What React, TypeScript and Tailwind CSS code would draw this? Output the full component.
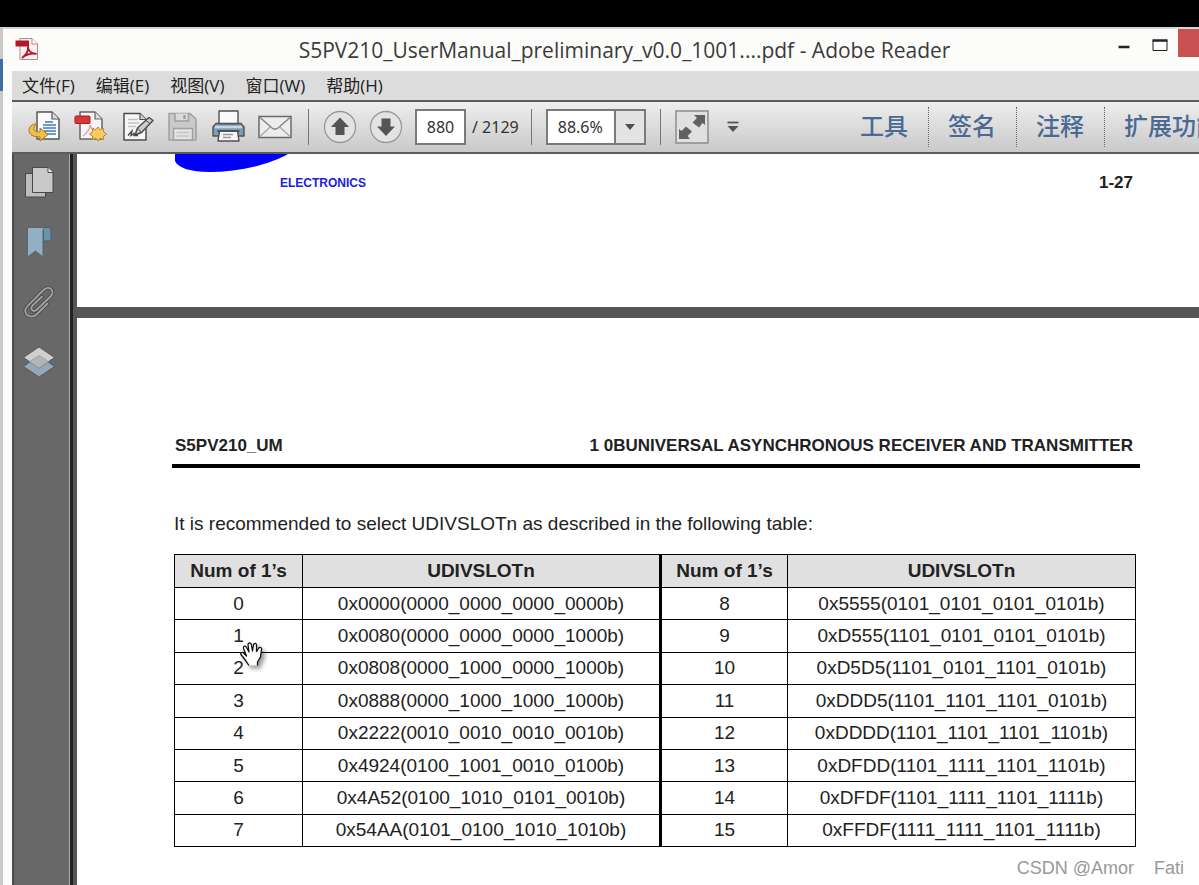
import { useState } from 'react'
import type { ReactNode } from 'react'

const MENU_ITEMS = ['文件(F)', '编辑(E)', '视图(V)', '窗口(W)', '帮助(H)']
const TASK_PANES = ['工具', '签名', '注释', '扩展功能']

const SLOT_ROWS = [
  ['0', '0x0000(0000_0000_0000_0000b)', '8', '0x5555(0101_0101_0101_0101b)'],
  ['1', '0x0080(0000_0000_0000_1000b)', '9', '0xD555(1101_0101_0101_0101b)'],
  ['2', '0x0808(0000_1000_0000_1000b)', '10', '0xD5D5(1101_0101_1101_0101b)'],
  ['3', '0x0888(0000_1000_1000_1000b)', '11', '0xDDD5(1101_1101_1101_0101b)'],
  ['4', '0x2222(0010_0010_0010_0010b)', '12', '0xDDDD(1101_1101_1101_1101b)'],
  ['5', '0x4924(0100_1001_0010_0100b)', '13', '0xDFDD(1101_1111_1101_1101b)'],
  ['6', '0x4A52(0100_1010_0101_0010b)', '14', '0xDFDF(1101_1111_1101_1111b)'],
  ['7', '0x54AA(0101_0100_1010_1010b)', '15', '0xFFDF(1111_1111_1101_1111b)'],
]

function PdfIcon() {
  return (
    <svg className="w-6 h-6" viewBox="0 0 24 24" fill="none">
      <path d="M5 1.5H17L22.5 7V22.5H5Z" fill="#f8f1f1" stroke="#b08a8a" />
      <path d="M17 1.5V7H22.5" fill="#fff" stroke="#b08a8a" />
      <rect x="0.5" y="3.5" width="13.5" height="6" fill="#b3162b" />
      <path d="M7.500 20.500C11 18 13.500 13.500 13 9.500C13 13.500 16 16.500 21 16.800C16 16.300 11.500 17.300 7.500 20.500Z" stroke="#b3162b" strokeWidth="1.800" strokeLinejoin="round" />
    </svg>
  )
}

function OpenIcon() {
  return (
    <svg className="w-[34px] h-[34px]" viewBox="0 0 34 34" fill="none">
      <path d="M9 2H24L31 9V29H9Z" fill="#fafafa" stroke="#555" strokeWidth="1.5" strokeLinejoin="round" />
      <path d="M24 2V9H31" fill="#ddd" stroke="#555" strokeWidth="1.2" />
      <path d="M17 12H25M15 15H28M15 18H28M16 21H28M18 24H28" stroke="#3a7cc0" strokeWidth="1.5" />
      <path d="M9.500 13.500C3.500 14 1 17 1 20.500C1 25 6 27 12 27V31L20 24.500L12 18V22C8.500 22 6 21 6 18.800C6 16.500 7.500 14.800 9.500 13.500Z" fill="#f4be4b" stroke="#a8741b" strokeLinejoin="round" />
    </svg>
  )
}

function CreatePdfIcon() {
  return (
    <svg className="w-[34px] h-[34px]" viewBox="0 0 34 34" fill="none">
      <path d="M6 2H21L28 9V29H6Z" fill="#f5f5f5" stroke="#666" strokeWidth="1.5" strokeLinejoin="round" />
      <path d="M21 2V9H28" fill="#ddd" stroke="#666" strokeWidth="1.200" />
      <path d="M9 26C14 22 16 18 16 15C17 19 20 21 23 21" stroke="#e7a8a6" strokeWidth="1.500" />
      <rect x="1" y="6" width="15" height="7.500" rx="1" fill="#dc3438" stroke="#9d1f25" />
      <path d="M24 17L26.100 19.800L29.300 18.300L29.500 21.800L32.500 24L29.500 26.200L29.300 29.700L26.100 28.200L24 31L21.900 28.200L18.700 29.700L18.500 26.200L15.500 24L18.500 21.800L18.700 18.300L21.900 19.800Z" fill="#f7cd62" stroke="#b98527" strokeLinejoin="round" />
    </svg>
  )
}

function SignIcon() {
  return (
    <svg className="w-[34px] h-[34px]" viewBox="0 0 34 34" fill="none">
      <path d="M4 3.500H20L26 9.500V30H4Z" fill="#f6f6f6" stroke="#4d4d4d" strokeWidth="1.500" strokeLinejoin="round" />
      <path d="M20 3.500V9.500H26" fill="#d4d4d4" stroke="#4d4d4d" strokeWidth="1.200" />
      <path d="M8 9.500H18M8 13H19M8 16.500H16" stroke="#c2c2c2" strokeWidth="1.500" />
      <path d="M8 25.500L12 21L11 25.500L14 23.500V25.500H18" stroke="#444" strokeWidth="1.300" />
      <path d="M15 25L17.500 18L29 7.500L33 10.500L21.500 22.500Z" fill="#c9ced4" stroke="#4d4d4d" strokeWidth="1.500" strokeLinejoin="round" />
      <path d="M17.500 18L21.500 22.500M26 10.500L30 13.500" stroke="#4d4d4d" />
    </svg>
  )
}

function SaveIcon() {
  return (
    <svg className="w-[34px] h-[34px]" viewBox="0 0 34 34" fill="none" stroke="#a0a0a0" strokeWidth="1.500">
      <path d="M3 3.500H24L30 9V30H3Z" fill="#cacaca" strokeLinejoin="round" />
      <path d="M9 3.500V11H22.500V3.500" fill="#dadada" />
      <path d="M18.500 5V9" strokeWidth="2.500" />
      <rect x="7.500" y="18.500" width="19" height="11.500" fill="#e4e4e4" />
      <path d="M10.500 22.500H23.500M10.500 26H23.500" stroke="#c4c4c4" />
    </svg>
  )
}

function PrintIcon() {
  return (
    <svg className="w-[34px] h-[34px]" viewBox="0 0 34 34" fill="none" stroke="#505050" strokeWidth="1.400" strokeLinejoin="round">
      <path d="M4 13.500H29L32 17V26H1V17Z" fill="#7d9dba" />
      <rect x="7" y="1" width="19" height="12.500" fill="#fafafa" />
      <path d="M3 17H30" stroke="#c6d8e6" strokeWidth="2.500" />
      <path d="M7.500 21H25.500L27 31H6Z" fill="#f7f7f7" />
      <path d="M5.500 21H27.500" strokeWidth="2" />
      <path d="M11 24.500H21M11 27.500H19" stroke="#999" />
    </svg>
  )
}

function MailIcon() {
  return (
    <svg className="w-[34px] h-[34px]" viewBox="0 0 34 34" fill="none" stroke="#6a6a6a" strokeWidth="1.500">
      <rect x="1" y="6.500" width="32" height="21" fill="#ededed" />
      <path d="M2 7.500L14 18C16 19.500 18 19.500 20 18L32 7.500" stroke="#858585" />
      <path d="M2 26.500L12.500 16.800M32 26.500L21.500 16.800" stroke="#a5a5a5" strokeWidth="1.200" />
    </svg>
  )
}

function ArrowIcon({ down }: { down?: boolean }) {
  return (
    <svg className="w-[34px] h-[34px]" viewBox="0 0 34 34" fill="none">
      <circle cx="17" cy="17" r="15.500" fill="#e3e3e3" stroke="#999" strokeWidth="1.300" />
      <path d={down ? 'M12.500 8.500H21.500V16.500H26L17 26L8 16.500H12.500Z' : 'M17 7.500L26 17H21.500V25H12.500V17H8Z'} fill="#555" />
    </svg>
  )
}

function FullScreenIcon() {
  return (
    <svg className="w-[34px] h-[34px]" viewBox="0 0 34 34" fill="none">
      <rect x="1" y="1" width="32" height="32" fill="#e0e0e0" stroke="#8d8d8d" strokeWidth="1.500" />
      <path d="M19 5H30V15L27.500 13L24 17.500L17.500 12.500L22 8Z" fill="#616161" />
      <path d="M15 29H4V19L6.500 21L11 16.500L17 21.500L12.500 26Z" fill="#616161" />
    </svg>
  )
}

function PagesIcon() {
  return (
    <svg className="w-8 h-8" viewBox="0 0 32 32" fill="none" stroke="#484848" strokeLinejoin="round">
      <path d="M2.500 7.500H22.500V31H2.500Z" fill="#bdbdbd" />
      <path d="M9.500 1.500H25L30 6.500V26.500H9.500Z" fill="#c9c9c9" />
      <path d="M25 1.500V6.500H30" fill="#eee" />
    </svg>
  )
}

function BookmarkIcon() {
  return (
    <svg className="w-8 h-8" viewBox="0 0 32 32" fill="none" strokeLinejoin="round">
      <path d="M18 1.500H25C27 1.500 28 3 28 5V15H20.500V5Z" fill="#6b93ab" stroke="#47616f" />
      <path d="M6 1.500H22C20.500 2 20 3.500 20 5V31L12.500 25L4.500 31V4C4.500 2.500 5 1.500 6 1.500Z" fill="#92afc6" stroke="#56656f" />
    </svg>
  )
}

function ClipIcon() {
  return (
    <svg className="w-8 h-8" viewBox="0 0 32 32" fill="none" strokeLinecap="round">
      <path d="M24.500 17.500L13.500 28.500C7 34 -1.500 27 4 20.500L20.500 4C26 -1.500 33 5 27.500 10.500L13.500 24C10 26.500 6.500 23 9.500 19.500L19 10.500" stroke="#474747" strokeWidth="3.500" />
      <path d="M24.500 17.500L13.500 28.500C7 34 -1.500 27 4 20.500L20.500 4C26 -1.500 33 5 27.500 10.500L13.500 24C10 26.500 6.500 23 9.500 19.500L19 10.500" stroke="#a2a2a2" strokeWidth="1.800" />
    </svg>
  )
}

function LayersIcon() {
  return (
    <svg className="w-8 h-8" viewBox="0 0 32 32" fill="none" stroke="#4c4c4c" strokeWidth="0.800">
      <path d="M16 9.500L31.500 20.500L16 31L0.500 20.500Z" fill="#93a9b9" />
      <path d="M16 1L31.500 11.500L16 22L0.500 11.500Z" fill="#cfcfcf" />
      <path d="M16 9.500L25.500 15.500L16 22L6.500 15.500Z" fill="#b2b6b9" stroke="#999" />
    </svg>
  )
}

function HandCursor() {
  return (
    <svg className="absolute left-[64px] top-[16px] w-7 h-7 z-10 drop-shadow-[3px_3px_2px_rgba(0,0,0,0.4)]" viewBox="0 0 28 28" aria-hidden="true">
      <path
        d="M10 25.500L7 21L2 14.500C1 12.500 3.500 11.500 5 13.500L7.500 16L4.500 8.500C4 6 6.500 5.200 7.500 7.500L10 12L9 5C9 2.500 11.800 2.200 12.300 4.500L13.500 11L14.500 5C15 2.500 17.800 3 17.500 5.500L17.500 11.500L19.500 8.500C20.500 6.500 23 7.500 22.500 9.500L21.500 17L18.500 22V25.500Z"
        fill="#fff"
      />
      <path
        d="M10 25.500L7 21L2 14.500C1 12.500 3.500 11.500 5 13.500L7.500 16L4.500 8.500C4 6 6.500 5.200 7.500 7.500L10 12L9 5C9 2.500 11.800 2.200 12.300 4.500L13.500 11L14.500 5C15 2.500 17.800 3 17.500 5.500L17.500 11.500L19.500 8.500C20.500 6.500 23 7.500 22.500 9.500L21.500 17L18.500 22V25.500"
        fill="none"
        stroke="#111"
        strokeWidth="1.300"
        strokeLinejoin="round"
      />
    </svg>
  )
}

function ToolButton({ label, children }: { label: string; children: ReactNode }) {
  return (
    <button type="button" aria-label={label} className="w-[34px] h-[34px] shrink-0 hover:brightness-105">
      {children}
    </button>
  )
}

function Divider() {
  return <span className="w-px h-9 shrink-0 bg-[#777]" />
}

function TitleBar() {
  return (
    <header className="flex items-start h-[44px] border-t-2 border-[#d5d5d3] bg-[#fcfcfa]">
      <span className="ml-3 mt-2 shrink-0">
        <PdfIcon />
      </span>
      <h1 className="flex-1 mt-1 pl-[104px] text-center text-[21px] leading-[34px] text-[#3b3b3b] whitespace-nowrap font-['Open_Sans','Noto_Sans',sans-serif]">
        S5PV210_UserManual_preliminary_v0.0_1001....pdf - Adobe Reader
      </h1>
      <div className="flex shrink-0">
        <button type="button" aria-label="最小化" className="w-9 h-8 flex items-center justify-center">
          <svg className="w-3 h-3" viewBox="0 0 12 12">
            <path d="M0.500 8H11.500" stroke="#222" strokeWidth="2.500" />
          </svg>
        </button>
        <button type="button" aria-label="最大化" className="w-9 h-8 flex items-center justify-center">
          <svg className="w-4 h-3" viewBox="0 0 16 12" fill="none">
            <path d="M1 1.500H15V11.500H1Z" stroke="#222" />
            <path d="M0.500 1.500H15.500" stroke="#222" strokeWidth="2.500" />
          </svg>
        </button>
        <button type="button" aria-label="关闭" className="w-[21px] h-7 bg-[#c75050]" />
      </div>
    </header>
  )
}

function ToolBar() {
  const [page, setPage] = useState('880')
  const [zoom, setZoom] = useState('88.6%')

  return (
    <div className="flex items-center h-[54px] overflow-hidden border-y-2 border-[#5c5c5c] bg-linear-to-b from-[#eeeeee] to-[#c9c9c9] text-base text-[#333] font-['Noto_Sans','Noto_Sans_CJK_SC',sans-serif]">
      <div className="flex items-center gap-3 pl-4 pr-4">
        <ToolButton label="打开"><OpenIcon /></ToolButton>
        <ToolButton label="创建 PDF"><CreatePdfIcon /></ToolButton>
        <ToolButton label="签名"><SignIcon /></ToolButton>
        <ToolButton label="保存"><SaveIcon /></ToolButton>
        <ToolButton label="打印"><PrintIcon /></ToolButton>
        <ToolButton label="电子邮件"><MailIcon /></ToolButton>
      </div>
      <Divider />
      <div className="flex items-center gap-3 px-[14px]">
        <ToolButton label="上一页"><ArrowIcon /></ToolButton>
        <ToolButton label="下一页"><ArrowIcon down /></ToolButton>
        <input
          type="text"
          aria-label="页码"
          value={page}
          onChange={(e) => setPage(e.target.value)}
          className="w-[51px] h-9 border-2 border-[#7a7a7a] bg-white text-center outline-none"
        />
      </div>
      <span className="-ml-2 mr-3 whitespace-nowrap">/ 2129</span>
      <Divider />
      <div className="relative ml-[14px] mr-[14px] shrink-0">
        <select
          aria-label="缩放"
          value={zoom}
          onChange={(e) => setZoom(e.target.value)}
          className="appearance-none w-[100px] h-9 pl-[10px] border-2 border-[#7a7a7a] bg-white outline-none"
        >
          <option>88.6%</option>
          <option>100%</option>
          <option>125%</option>
        </select>
        <span className="absolute inset-y-[2px] right-[2px] w-[30px] flex items-center justify-center border-l-2 border-[#7a7a7a] bg-[#e3e3e3] pointer-events-none">
          <svg className="w-3 h-2" viewBox="0 0 12 8">
            <path d="M1 1H11L6 7Z" fill="#4f4f4f" />
          </svg>
        </span>
      </div>
      <Divider />
      <div className="flex items-center gap-4 pl-[14px]">
        <ToolButton label="全屏"><FullScreenIcon /></ToolButton>
        <button type="button" aria-label="更多" className="w-4 h-[34px] flex items-center justify-center">
          <svg className="w-3 h-3" viewBox="0 0 12 12">
            <path d="M0.500 1.500H11.500" stroke="#555" strokeWidth="1.800" />
            <path d="M0.500 5H11.500L6 11Z" fill="#555" />
          </svg>
        </button>
      </div>
      <div className="flex ml-auto w-[358px] shrink-0 overflow-hidden text-2xl text-[#4a6a92] font-['Noto_Sans_CJK_SC',sans-serif]">
        {TASK_PANES.map((name) => (
          <button
            key={name}
            type="button"
            className="h-10 pb-1 pl-[19px] pr-5 shrink-0 leading-9 font-medium whitespace-nowrap border-r border-dotted border-[#666] last:border-r-0"
          >
            {name}
          </button>
        ))}
      </div>
    </div>
  )
}

function SidePanel() {
  return (
    <nav className="flex flex-col items-center gap-7 w-[58px] shrink-0 pt-3 pr-[6px] border-l-2 border-r border-l-[#4c4c4c] border-r-[#aaa] bg-[#686868]">
      <button type="button" aria-label="页面缩略图"><PagesIcon /></button>
      <button type="button" aria-label="书签"><BookmarkIcon /></button>
      <button type="button" aria-label="附件"><ClipIcon /></button>
      <button type="button" aria-label="图层"><LayersIcon /></button>
    </nav>
  )
}

function SlotTable() {
  return (
    <table className="w-full h-[293px] table-fixed border-collapse text-[19px] leading-6 text-[#222] text-center">
      <thead>
        <tr className="h-[33px] bg-[#e0e0e0]">
          <th className="w-[128px] border border-black">Num of 1’s</th>
          <th className="border border-black">UDIVSLOTn</th>
          <th className="w-[127px] border border-l-[3px] border-black">Num of 1’s</th>
          <th className="w-[348px] border border-black">UDIVSLOTn</th>
        </tr>
      </thead>
      <tbody>
        {SLOT_ROWS.map(([lowNum, lowSlot, highNum, highSlot]) => (
          <tr key={lowNum}>
            <td className="border border-black">
              {lowNum === '1' ? (
                <div className="relative">
                  {lowNum}
                  <HandCursor />
                </div>
              ) : (
                lowNum
              )}
            </td>
            <td className="border border-black">{lowSlot}</td>
            <td className="border border-l-[3px] border-black">{highNum}</td>
            <td className="border border-black">{highSlot}</td>
          </tr>
        ))}
      </tbody>
    </table>
  )
}

function DocumentView() {
  return (
    <main className="relative flex flex-col flex-1 min-w-0 gap-[11px] border-l-4 border-[#555] bg-[#555] text-[#222] font-['Liberation_Sans',Arial,sans-serif]">
      {/* Tail of the previous page */}
      <section className="h-[153px] bg-white pl-[98px] pr-[66px]">
        <svg className="block w-[114px] h-[19px]" viewBox="0 0 114 19" aria-label="SAMSUNG">
          <path d="M0 0V7C3 14 16 18 34 18C62 18 94 11 113 0Z" fill="#0000fa" />
        </svg>
        <div className="flex items-center justify-between leading-5 font-bold">
          <span className="pl-[105px] text-[12px] text-[#1d1de0]">ELECTRONICS</span>
          <span className="text-[17px]">1-27</span>
        </div>
      </section>

      <section className="flex-1 bg-white pl-[95px] pr-[59px] pt-[118px] pb-9">
        <div className="flex justify-between pl-[3px] pr-[7px] pb-2 border-b-4 border-black text-[17px] leading-5 font-bold whitespace-nowrap">
          <span>S5PV210_UM</span>
          <span>1 0BUNIVERSAL ASYNCHRONOUS RECEIVER AND TRANSMITTER</span>
        </div>
        <div className="pl-[2px] pr-1">
          <p className="pt-11 pb-[18px] text-[19px] leading-6">
            It is recommended to select UDIVSLOTn as described in the following table:
          </p>
          <SlotTable />
        </div>
      </section>

      <span className="absolute right-[15px] bottom-[5px] text-[18px] leading-6 text-[#999] whitespace-pre">CSDN @Amor    Fati</span>
    </main>
  )
}

export default function App() {
  return (
    <div className="flex flex-col min-h-screen bg-black pt-[27px] overflow-hidden">
      <div className="flex flex-1 bg-[#c9c9c7]">
        {/* Edge of the window behind */}
        <div className="w-[3px] shrink-0 pt-8">
          <div className="h-8 bg-[#3f6ea5]" />
        </div>
        <div className="flex flex-col flex-1 min-w-0 bg-[#fbfdfb]">
          <TitleBar />
          <div className="flex flex-col flex-1 pl-[9px]">
            <nav className="flex items-center gap-[21px] h-[29px] pl-[10px] bg-[#dcdcdc] text-[17px] text-[#222] whitespace-nowrap font-['Open_Sans','Noto_Sans_CJK_SC',sans-serif]">
              {MENU_ITEMS.map((item) => (
                <button key={item} type="button" className="hover:underline">{item}</button>
              ))}
            </nav>
            <ToolBar />
            <div className="flex flex-1">
              <SidePanel />
              <div className="w-[3px] shrink-0 bg-[#222]" />
              <DocumentView />
            </div>
          </div>
        </div>
      </div>
    </div>
  )
}
